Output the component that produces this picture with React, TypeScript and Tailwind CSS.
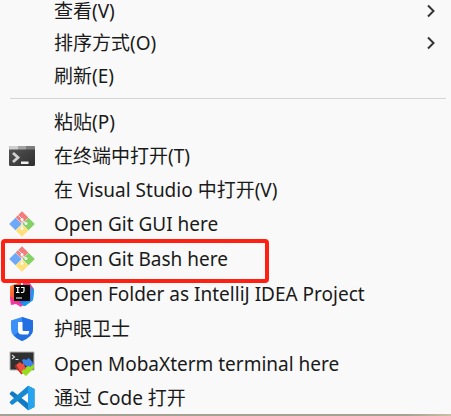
import type { ReactNode } from "react";

function TerminalIcon() {
  return (
    <svg viewBox="0 0 26 22" className="h-[22px] w-[26px]" aria-hidden="true">
      <defs>
        <linearGradient id="term" x1="0" y1="0" x2="1" y2="1">
          <stop offset="0" stopColor="#565656" />
          <stop offset="1" stopColor="#2f2f2f" />
        </linearGradient>
      </defs>
      <rect x="0" y="1" width="26" height="20" rx="1.5" fill="url(#term)" />
      <path d="M1.500 1H9V4.500H0V2.500Q0 1 1.500 1Z" fill="#cfcfcf" />
      <path d="M9 1h8v3.500H9z" fill="#a3a3a3" />
      <path d="M17 1h7.500q1.500 0 1.500 1.500V4.500h-9z" fill="#7d7d7d" />
      <path d="M4 8l5 4.500-5 4.500" fill="none" stroke="#d2d2d2" strokeWidth="2.800" />
      <path d="M12 16.500h7.500v2.500H12z" fill="#f2f2f2" />
    </svg>
  );
}

function GitIcon() {
  return (
    <svg viewBox="0 0 26 26" className="size-[26px]" aria-hidden="true">
      <path d="M13 .2L19.300 6.500 13 12.800 6.700 6.500Z" fill="#f47c7c" />
      <path d="M6.500 6.700L12.800 13 6.500 19.300 .2 13Z" fill="#70a8f8" />
      <path d="M19.500 6.700L25.800 13 19.500 19.300 13.200 13Z" fill="#84d164" />
      <path d="M13 13.200L19.300 19.500 13 25.800 6.700 19.500Z" fill="#ffe07a" />
      <path d="M9.500 4.500L13 8v10M13 9l4 3.500" fill="none" stroke="#f9f9f9" strokeWidth="1" />
      <circle cx="13" cy="8.500" r="1.500" fill="#f9f9f9" />
      <circle cx="17" cy="12.500" r="1.500" fill="#f9f9f9" />
      <circle cx="13" cy="17.500" r="1.500" fill="#f9f9f9" />
    </svg>
  );
}

function IntelliJIcon() {
  return (
    <svg viewBox="0 0 26 26" className="size-[26px]" aria-hidden="true">
      <defs>
        <linearGradient id="ijPink" x1="0" y1="0" x2="1" y2="1">
          <stop offset="0" stopColor="#ff9a2e" />
          <stop offset=".5" stopColor="#fb4d3d" />
          <stop offset="1" stopColor="#f0248c" />
        </linearGradient>
        <linearGradient id="ijBlue" x1="0" y1="0" x2="0" y2="1">
          <stop offset="0" stopColor="#ff3d78" />
          <stop offset=".45" stopColor="#8b5bd8" />
          <stop offset="1" stopColor="#087cfa" />
        </linearGradient>
      </defs>
      <path d="M1 5L12 1v24L8 22 2 23 1 16z" fill="url(#ijPink)" />
      <path d="M14 2l6-1 5 7-1 11-8 6-6-1z" fill="url(#ijBlue)" />
      <path d="M22 6l3 3-1 10-8 6-5-2 11-4z" fill="#149cee" />
      <path d="M1 15l6 6 7 2-2 3-5-3-5 1z" fill="#f435a2" />
      <rect x="5" y="4" width="16" height="16" fill="#080808" />
      <path d="M7 6.500h3.500M8.750 6.500v5M7 11.500h3.500M12 6.500h3v3.500q0 1.500-1.500 1.500H12M7 17h6" fill="none" stroke="#fff" strokeWidth="1.200" />
    </svg>
  );
}

function GuardIcon() {
  return (
    <svg viewBox="0 0 26 26" className="size-[26px]" aria-hidden="true">
      <path d="M13 1l11 3.500V13q0 7.500-11 12Q2 20.500 2 13V4.500z" fill="#3b91f7" />
      <path d="M13 1l11 3.500V13q0 7.500-11 12-5-2.300-8-5.500L13 13z" fill="#216fe0" />
      <path d="M9 6v8.500q0 4 4 4h6q1-1.500 1.300-3.500H15q-1.500 0-1.500-1.500V6z" fill="#fff" />
    </svg>
  );
}

function MobaIcon() {
  return (
    <svg viewBox="0 0 26 26" className="size-[26px]" aria-hidden="true">
      <path d="M1 1h24v18H1z" fill="#303030" stroke="#b5b5b5" />
      <path d="M3 4l2.500 2L3 8M6.500 8.500h3" fill="none" stroke="#ddd" strokeWidth="1.100" />
      <path d="M7 14l4-3 2 2 1.500-1 2.500 6-4 5z" fill="#f05040" />
      <path d="M13 9l2-1 2 1 3-2 5 6-4 4-4-2-3-3z" fill="#3b83e8" />
      <path d="M17 16l3-1 1 1 4-3v4l-8 8-5-4 3-3 1 1z" fill="#98dc1c" />
      <path d="M7 14v2l6 7" fill="none" stroke="#c92a20" strokeWidth="1.500" />
    </svg>
  );
}

function CodeIcon() {
  return (
    <svg viewBox="0 0 26 26" className="size-[26px]" aria-hidden="true">
      <path d="M19 .8L25.500 4v18L19 25.200 1 9.500q-.8-.8 0-1.500l1.500-1.400q.8-.6 1.600 0L19 18z" fill="#117ac4" />
      <path d="M19 .8V8L4 19.400q-.8.600-1.600 0L1 18q-.8-.8 0-1.500z" fill="#1689d2" />
      <path d="M19 .8L25.500 4v18L19 25.200z" fill="#27a4ee" />
    </svg>
  );
}

function Chevron() {
  return (
    <svg viewBox="0 0 8 14" className="h-[14px] w-2" aria-hidden="true">
      <path d="M1 1.500L6.500 7 1 12.500" fill="none" stroke="#333" strokeWidth="2" />
    </svg>
  );
}

type ItemProps = {
  children: ReactNode;
  icon?: ReactNode;
  submenu?: boolean;
  highlighted?: boolean;
  size: string;
};

function Item({ children, icon, submenu, highlighted, size }: ItemProps) {
  return (
    <button
      type="button"
      role="menuitem"
      aria-haspopup={submenu ? "menu" : undefined}
      className={`relative flex w-full items-center pr-4 pl-[9px] text-left whitespace-pre ${size}`}
    >
      <span className="flex w-[45px] shrink-0 items-center">{icon}</span>
      <span className="flex-1">{children}</span>
      {submenu && <Chevron />}
      {highlighted && (
        <span className="pointer-events-none absolute -top-0.5 left-px z-10 h-11 w-[268px] rounded-[4px] border-4 border-[#ff2014]" />
      )}
    </button>
  );
}

export default function App() {
  return (
    <div className="bg-[#f9f9f9] font-['Noto_Sans','Noto_Sans_CJK_SC',sans-serif] text-[19px] leading-5 text-[#1a1a1a]">
      <div role="menu">
        <Item size="h-[27px] pb-[5px]" submenu>查看(V)</Item>
        <Item size="h-8" submenu>排序方式(O)</Item>
        <Item size="h-[34px]">刷新(E)</Item>
        <hr className="mt-[5px] mr-[5px] mb-[6px] ml-[10px] border-[#d5d5d5]" />
        <Item size="h-[34px]">粘贴(P)</Item>
        <Item size="h-[34px]" icon={<TerminalIcon />}>在终端中打开(T)</Item>
        <Item size="h-[34px]">在 Visual Studio 中打开(V)</Item>
        <Item size="h-[34px]" icon={<GitIcon />}>Open Git GUI here</Item>
        <Item size="h-[35px]" icon={<GitIcon />} highlighted>Open Git Bash here</Item>
        <Item size="h-[35px]" icon={<IntelliJIcon />}>Open Folder as IntelliJ IDEA Project</Item>
        <Item size="h-[35px]" icon={<GuardIcon />}>护眼卫士</Item>
        <Item size="h-[35px]" icon={<MobaIcon />}>Open MobaXterm terminal here</Item>
        <Item size="h-[33px]" icon={<CodeIcon />}>通过 Code 打开</Item>
      </div>
      <div className="h-0.5 bg-linear-to-r from-[#a5a195] from-90% to-[#c9bfa3]" />
    </div>
  );
}
